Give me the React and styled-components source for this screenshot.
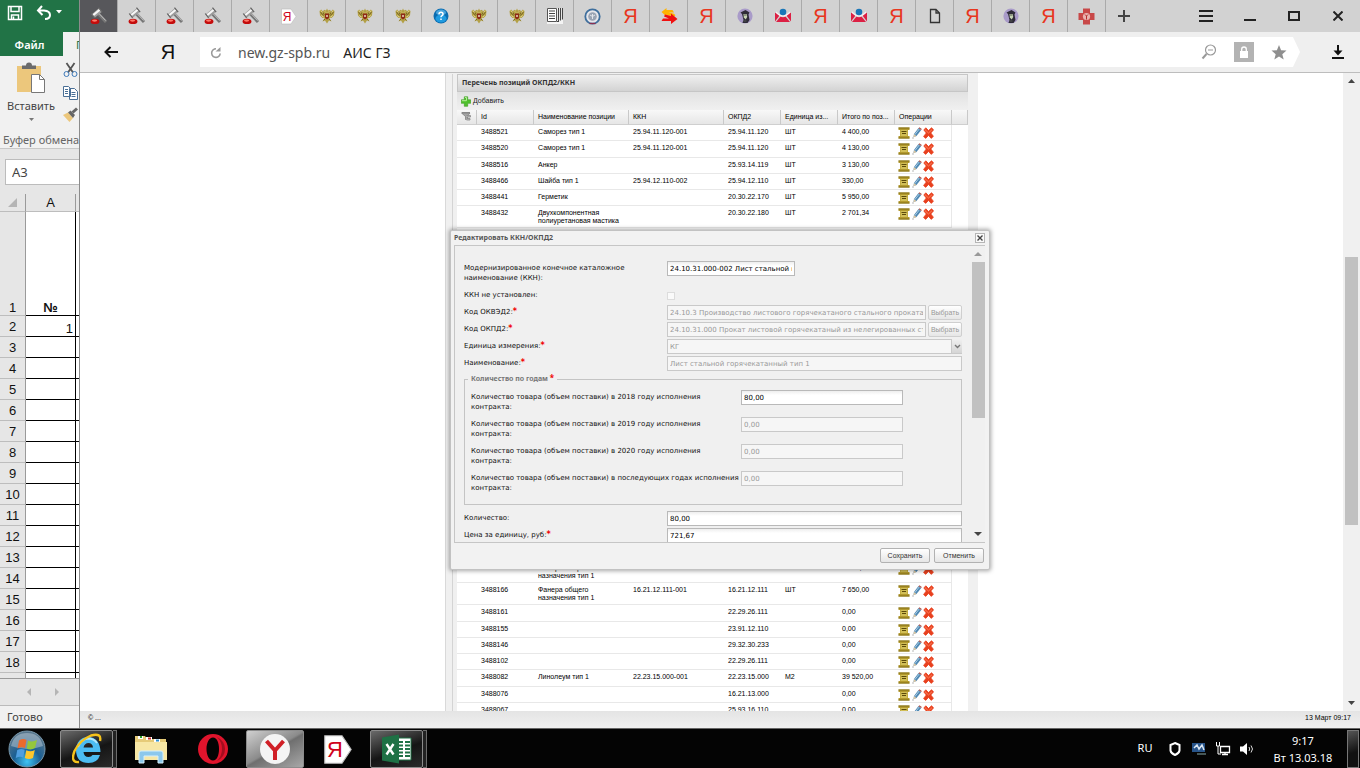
import React from "react";
import styled, { createGlobalStyle, css } from "styled-components";

const GlobalStyle = createGlobalStyle`
  * { box-sizing: border-box; }
  html, body { margin: 0; padding: 0; }
  body { font-family: "Noto Sans", sans-serif; overflow: hidden; }
  button, input, select { font-family: inherit; margin: 0; }
`;

const tiny = css`
  font-family: "Liberation Sans", sans-serif;
  font-size: 7px;
  line-height: 8px;
`;

const small = css`
  font-family: "DejaVu Sans", sans-serif;
  font-size: 7px;
  line-height: 10px;
`;

const bare = css`
  border: 0;
  padding: 0;
  background: none;
  display: flex;
  align-items: center;
  justify-content: center;
  color: inherit;
`;

const Screen = styled.div`
  display: flex;
  flex-direction: column;
  height: 100vh;
  overflow: hidden;
`;

const Desktop = styled.div`
  display: flex;
  flex: 1;
  min-height: 0;
`;

/* ---------- spreadsheet window ---------- */

const Sheet = styled.section`
  display: flex;
  flex-direction: column;
  flex: 0 0 80px;
  min-width: 0;
  overflow: hidden;
  background: #e6e6e6;
  color: #444;
  border-right: 1px solid #8c8c8c;
`;

const QuickBar = styled.div`
  display: flex;
  gap: 12px;
  flex: 0 0 32px;
  padding: 3px 0 10px 7px;
  background: #217346;
`;

const PlainButton = styled.button`
  ${bare}
`;

const RibbonTabs = styled.div`
  display: flex;
  flex: 0 0 24px;
  background: #f1f1f1;
`;

const RibbonTab = styled.button`
  ${bare}
  flex: 0 0 ${(p) => (p.$file ? "63px" : "40px")};
  padding-left: ${(p) => (p.$file ? "0" : "13px")};
  justify-content: ${(p) => (p.$file ? "center" : "flex-start")};
  padding-right: ${(p) => (p.$file ? "4px" : "0")};
  font-size: 11px;
  font-weight: ${(p) => (p.$file ? "600" : "400")};
  color: ${(p) => (p.$file ? "#fff" : "#217346")};
  background: ${(p) => (p.$file ? "#217346" : "#f1f1f1")};
`;

const Ribbon = styled.div`
  display: flex;
  flex-direction: column;
  flex: 0 0 93px;
  background: #f1f1f1;
  border-bottom: 1px solid #c8c8c8;
`;

const RibbonTools = styled.div`
  display: flex;
  flex: 1;
  padding-top: 6px;
`;

const PasteButton = styled.button`
  ${bare}
  flex: 0 0 62px;
  flex-direction: column;
  justify-content: flex-start;
  font-size: 11px;
  line-height: 16px;
  gap: 4px;
`;

const ToolStack = styled.div`
  display: flex;
  flex-direction: column;
  gap: 7px;
`;

const RibbonLabel = styled.div`
  font-size: 11px;
  line-height: 16px;
  padding-left: 3px;
  white-space: nowrap;
  color: #666;
`;

const NameBoxRow = styled.div`
  display: flex;
  flex: 0 0 45px;
  padding: 10px 0 9px 5px;
`;

const NameBox = styled.input`
  width: 90px;
  flex: none;
  border: 1px solid #bcbcbc;
  background: #fff;
  padding: 0 6px;
  font-size: 13px;
  color: #444;
`;

const GridArea = styled.div`
  flex: 1;
  min-height: 0;
  overflow: hidden;
`;

const CellTable = styled.table`
  table-layout: fixed;
  width: 140px;
  border-collapse: separate;
  border-spacing: 0;
  font: 13px "Liberation Sans", sans-serif;
  color: #111;
`;

const RowHead = styled.th`
  height: ${(p) => (p.$h ? p.$h : 21)}px;
  padding: 0;
  font-weight: 400;
  text-align: center;
  vertical-align: ${(p) => (p.$h > 30 ? "bottom" : "middle")};
  background: #e6e6e6;
  border-right: 1px solid #9a9a9a;
  border-bottom: 1px solid #bdbdbd;
`;

const SheetCell = styled.td`
  padding: 0 2px;
  background: #fff;
  text-align: ${(p) => (p.$center ? "center" : "right")};
  vertical-align: bottom;
  font-weight: ${(p) => (p.$center ? "700" : "400")};
  border-right: 1px solid #000;
  border-bottom: 1px solid #000;
`;

const SheetNav = styled.div`
  display: flex;
  align-items: center;
  gap: 24px;
  flex: 0 0 28px;
  padding-left: 27px;
  border-top: 1px solid #999;
  border-bottom: 1px solid #bbb;
`;

const SheetStatus = styled.div`
  flex: 0 0 22px;
  padding-left: 7px;
  font-size: 11px;
  line-height: 22px;
  background: #f1f1f1;
`;

/* ---------- browser window ---------- */

const Browser = styled.section`
  display: flex;
  flex-direction: column;
  flex: 1;
  min-width: 0;
  background: #fff;
`;

const TabStrip = styled.div`
  display: flex;
  flex: 0 0 32px;
  background: #d2d2d2;
`;

const Tab = styled.button`
  ${bare}
  flex: 0 1 38px;
  border-right: 1px solid #aaa;
  background: ${(p) => (p.$active ? "#57575b" : "#d2d2d2")};
`;

const NewTab = styled.button`
  ${bare}
  flex: 0 0 36px;
`;

const WindowButtons = styled.div`
  display: flex;
  margin-left: auto;
`;

const WindowButton = styled.button`
  ${bare}
  width: 44px;
`;

const Letter = styled.span`
  font: 20px/20px "Liberation Sans", sans-serif;
  color: ${(p) => p.$color || "#e8361e"};
`;

const Toolbar = styled.div`
  display: flex;
  align-items: center;
  flex: 0 0 41px;
  background: #efefef;
  border-bottom: 1px solid #bdbdbd;
`;

const ToolbarButton = styled.button`
  ${bare}
  width: ${(p) => p.$w}px;
  height: 32px;
`;

const AddressBar = styled.div`
  display: flex;
  align-items: center;
  flex: 1;
  height: 30px;
  margin-left: 6px;
  background: #fff;
  clip-path: polygon(0 0, calc(100% - 7px) 0, 100% 50%, calc(100% - 7px) 100%, 0 100%);
  font-size: 14px;
  color: #222;
`;

const Host = styled.span`
  color: #555;
  padding: 0 13px 0 6px;
`;

const AddressIcons = styled.div`
  display: flex;
  align-items: center;
  gap: 17px;
  margin-left: auto;
  padding-right: 13px;
`;

const LockBox = styled.button`
  ${bare}
  width: 20px;
  height: 20px;
  background: #b3b3b3;
`;

const Viewport = styled.div`
  display: flex;
  flex: 1;
  min-height: 0;
`;

const Page = styled.main`
  flex: 1;
  min-width: 0;
  overflow: hidden;
`;

const ScrollTrack = styled.div`
  display: flex;
  flex-direction: column;
  align-items: center;
  flex: 0 0 17px;
  padding: 6px 0;
  background: #f0f0f0;
`;

const ScrollThumb = styled.div`
  width: 13px;
  height: 268px;
  margin-top: 174px;
  margin-bottom: auto;
  background: #c1c1c1;
`;

const PageStatus = styled.footer`
  ${tiny}
  display: flex;
  justify-content: space-between;
  flex: 0 0 17px;
  padding: 3px 9px 0 8px;
  color: #000;
  background: linear-gradient(#e4e4e4, #f0f0f0);
`;

/* ---------- register grid ---------- */

const Column = styled.div`
  position: relative;
  width: 533px;
  height: 100%;
  margin: 0 auto;
  padding: 1px 10px 0 6px;
  background: #f0f0f0;
  border-left: 1px solid #d9d9d9;
`;

const Panel = styled.section`
  height: 100%;
  padding-left: 4px;
  overflow: hidden;
  border-left: 1px solid #d4d4d4;
  ${tiny}
`;

const PanelTitle = styled.h2`
  margin: 0;
  height: 18px;
  padding-left: 4px;
  font: bold 7px/16px "Noto Sans", sans-serif;
  color: #333;
  background: linear-gradient(#f0f0f0, #d3d3d3);
  border: 1px solid #c6c6c6;
`;

const PanelTools = styled.div`
  display: flex;
  height: 18px;
  padding-left: 4px;
  background: linear-gradient(#e2e2e2, #f0f0f0);
`;

const AddButton = styled.button`
  ${bare}
  ${tiny}
  gap: 2px;
  color: #222;
`;

const Register = styled.table`
  table-layout: fixed;
  width: 100%;
  border-collapse: separate;
  border-spacing: 0;
  background: #fff;
  color: #000;
`;

const HeadCell = styled.th`
  height: 15px;
  padding: 0 0 0 4px;
  font-weight: 400;
  text-align: left;
  white-space: nowrap;
  background: linear-gradient(#f8f8f8, #e6e6e6);
  border-right: 1px solid #c9c9c9;
  border-bottom: 1px solid #cfcfcf;
`;

const Row = styled.tr`
  height: ${(p) => p.$h || 16}px;
  &:nth-child(4n + 2) { height: ${(p) => p.$h || 17}px; }
`;

const Cell = styled.td`
  padding: ${(p) => (p.$icons ? "2px 0 0 3px" : "3px 0 0 4px")};
  ${(p) => p.$wrap && "padding-right: 8px;"}
  vertical-align: top;
  white-space: ${(p) => (p.$wrap ? "normal" : "nowrap")};
  border-bottom: ${(p) => (p.$blank ? "0" : "1px solid #e8e8e8")};
  border-right: ${(p) => (p.$icons ? "1px solid #e8e8e8" : "0")};
`;

const RowTools = styled.div`
  display: flex;
  gap: 1px;
`;

/* ---------- dialog ---------- */

const Dialog = styled.section`
  position: absolute;
  left: 4px;
  top: 157px;
  display: flex;
  flex-direction: column;
  width: 540px;
  height: 340px;
  padding: 0 4px 0 3px;
  background: #f2f2f2;
  border: 1px solid #c2c2c2;
  border-radius: 2px;
  box-shadow: 0 0 4px 1px rgba(0, 0, 0, 0.35);
  ${small}
`;

const DialogTitle = styled.header`
  display: flex;
  align-items: center;
  justify-content: space-between;
  flex: 0 0 14px;
  font: bold 7px/12px "Noto Sans", sans-serif;
  color: #555;
`;

const CloseButton = styled.button`
  ${bare}
  width: 10px;
  height: 10px;
  background: #fafafa;
  border: 1px solid #b5b5b5;
`;

const DialogBody = styled.div`
  display: flex;
  flex: 1;
  min-height: 0;
  overflow: hidden;
  background: #f0f0f0;
  border: 1px solid #c6c6c6;
  border-right: 0;
`;

const Form = styled.form`
  flex: 1;
  display: flex;
  flex-direction: column;
  gap: 2px;
  padding: 15px 9px 0;
`;

const Field = styled.div`
  display: flex;
  gap: 2px;
  flex: none;
  min-height: ${(p) => p.$h || 15}px;
`;

const Label = styled.label`
  flex: 0 0 ${(p) => p.$w || 201}px;
  padding: 2px 22px 0 0;
  color: #111;
  ${(p) => p.$w && "padding-right: 0; white-space: nowrap;"}
`;

const Star = styled.span`
  color: #f00000;
  font-weight: 700;
  font-size: 8px;
  line-height: 8px;
`;

const TextInput = styled.input`
  ${small}
  flex: ${(p) => (p.$w ? `0 0 ${p.$w}px` : "1")};
  min-width: 0;
  height: 15px;
  padding: 0 2px;
  color: #000;
  background: linear-gradient(#eee, #fff 4px);
  border: 1px solid #b9b9b9;
  border-radius: 0;
  &:disabled { color: #999; background: #f6f6f6; border-color: #c9c9c9; }
`;

const Tick = styled.input`
  appearance: none;
  width: 8px;
  height: 8px;
  margin-top: 4px;
  background: #fafafa;
  border: 1px solid #dcdcdc;
`;

const SelectWrap = styled.div`
  display: flex;
  position: relative;
  flex: 1;
`;

const Select = styled.select`
  ${small}
  appearance: none;
  flex: 1;
  height: 15px;
  padding: 0 2px;
  color: #999;
  opacity: 1;
  background: #f6f6f6;
  border: 1px solid #c9c9c9;
  border-radius: 0;
`;

const Trigger = styled.span`
  position: absolute;
  right: 0;
  top: 0;
  display: flex;
  align-items: center;
  justify-content: center;
  width: 11px;
  height: 14px;
  background: linear-gradient(#f0f0f0, #d5d5d5);
  border-left: 1px solid #c9c9c9;
  pointer-events: none;
`;

const PushButton = styled.button`
  ${tiny}
  width: ${(p) => p.$w}px;
  height: 15px;
  padding: 0;
  white-space: nowrap;
  color: #333;
  background: linear-gradient(#fff, #e6e6e6);
  border: 1px solid #b2b2b2;
  border-radius: 2px;
  &:disabled { color: #999; border-color: #cfcfcf; }
`;

const Years = styled.fieldset`
  display: flex;
  flex-direction: column;
  gap: 5px;
  flex: none;
  height: 131px;
  margin: 1px 0 4px;
  padding: 6px 6px 0;
  border: 1px solid #c4c4c4;
`;

const Legend = styled.legend`
  padding: 0 3px;
  margin-left: -3px;
  font: bold 7px/10px "Noto Sans", sans-serif;
  color: #777;
`;

const DialogScroll = styled.div`
  display: flex;
  flex-direction: column;
  align-items: center;
  flex: 0 0 14px;
  padding: 6px 0;
  background: #f0f0f0;
`;

const DialogThumb = styled.div`
  width: 13px;
  height: 156px;
  margin: 6px 0 auto;
  background: #c1c1c1;
`;

const DialogFooter = styled.footer`
  display: flex;
  justify-content: flex-end;
  gap: 4px;
  flex: 0 0 26px;
  padding: 5px 1px 0 0;
`;

/* ---------- taskbar ---------- */

const Taskbar = styled.nav`
  display: flex;
  align-items: center;
  flex: 0 0 40px;
  padding: 1px 1px 0 8px;
  color: #fff;
  background: #040404;
  border-top: 1px solid #666;
`;

const TaskButton = styled.button`
  ${bare}
  width: ${(p) => p.$w}px;
  height: 38px;
  border: ${(p) => (p.$kind ? "1px solid #8c8c8c" : "0")};
  border-radius: 2px;
  ${(p) => p.$kind === "open" && "background: linear-gradient(160deg, #6a6a6a, #151515 55%, #2a2a2a);"}
  ${(p) => p.$kind === "active" && "background: linear-gradient(150deg, #d0d0d0, #8b8b8b 48%, #6f6f6f 52%, #a8a8a8);"}
`;

const StackEdge = styled.span`
  width: 4px;
  height: 38px;
  border: 1px solid #6c6c6c;
  border-left: 0;
  background: #222;
`;

const Spacer = styled.span`
  flex: 0 0 ${(p) => p.$w}px;
`;

const Tray = styled.div`
  display: flex;
  align-items: center;
  gap: 8px;
  margin-left: auto;
`;

const Lang = styled.button`
  ${bare}
  font-size: 11px;
  width: 16px;
  margin-right: 6px;
  padding-bottom: 4px;
`;

const Clock = styled.time`
  width: 72px;
  margin-left: 4px;
  text-align: center;
  font-size: 11px;
  line-height: 17px;
  white-space: nowrap;
`;

const ShowDesktop = styled.button`
  width: 12px;
  height: 38px;
  padding: 0;
  background: linear-gradient(160deg, #555, #111 60%);
  border: 1px solid #777;
`;

/* ---------- drawings ---------- */

const Gavel = () => (
  <svg width="18" height="18" viewBox="0 0 18 18">
    <path d="M8 6.500 16 15" stroke="#777" strokeWidth="3" />
    <path d="M8.500 6 15.800 13.600" stroke="#c9c9c9" strokeWidth="1" />
    <path d="M1.500 7.500 9 1 12 4.800 4.500 11Z" fill="#9b9b9b" />
    <path d="M2.600 7.300 9 2 10.400 3.600 3.900 9Z" fill="#f6f6f6" />
    <path d="M1.200 6.500 4.600 10.800M8.500 .700 12.200 5.200" stroke="#666" strokeWidth="1.200" />
    <ellipse cx="5" cy="14.400" rx="4.400" ry="2.700" fill="#c40c0c" />
    <ellipse cx="4.600" cy="13.600" rx="2.600" ry="1.100" fill="#ff7a6a" />
  </svg>
);

const Eagle = () => (
  <svg width="18" height="18" viewBox="0 0 18 18">
    <path d="M1.500 4 3.200 2.400 5 4.500 6 2.800 8 3.500 9 1.500l1 2L12 2.800 13 4.500 14.800 2.400 16.500 4 16 8.500 13.500 11 11.500 11 13.500 14.500 11 13.500 9 16.500 7 13.500 4.500 14.500 6.500 11 4.500 11 2 8.500Z" fill="#b3a045" />
    <path d="M2.500 5 5.500 9M4.200 4.500 6.400 8M15.500 5 12.500 9M13.800 4.500 11.600 8M5.500 13.500 7 12M12.500 13.500 11 12" stroke="#6e5c1e" strokeWidth=".800" />
    <path d="M3 3.600 4.500 5.500M15 3.600 13.500 5.500M7 4.500l1 1M11 4.500l-1 1M3.500 8.500l2 1.500M14.500 8.500l-2 1.500" stroke="#f0e49a" strokeWidth=".900" />
    <path d="M7 6.500h4V11L9 12.500 7 11Z" fill="#8f2a18" />
    <circle cx="9" cy="9" r="1" fill="#e8d8c0" />
  </svg>
);

const Help = () => (
  <svg width="16" height="16" viewBox="0 0 16 16">
    <circle cx="8" cy="8" r="7.500" fill="#0b6cb0" />
    <ellipse cx="8" cy="10.500" rx="5.500" ry="4" fill="#1f9be0" />
    <ellipse cx="8" cy="4.500" rx="5" ry="3" fill="#4aa5dc" />
    <path d="M6 6.200Q6 4.200 8 4.200T10 6.200Q10 7.200 8.700 7.900 8 8.300 8 9.300M8 10.600v1.500" fill="none" stroke="#fff" strokeWidth="1.500" />
  </svg>
);

const YaBadge = ({ size = 17 }) => (
  <svg width={size} height={size} viewBox="0 0 17 17">
    <path d="M1.500 1h9.500L16 8.500 11 16H1.500Z" fill="#fff" stroke="#bbb" strokeWidth=".6" />
    <text x="2.800" y="12.800" fontSize="12" fontFamily="Liberation Sans, sans-serif" fill="#d0021b">Я</text>
  </svg>
);

const News = () => (
  <svg width="16" height="16" viewBox="0 0 16 16">
    <path d="M0 0h16v16H0Z" fill="#f4f4f4" />
    <path d="M.500 .500h9v13h-9Z" fill="#fff" stroke="#555" />
    <path d="M2 3h6M2 5.500h6M2 8h6M2 10.500h6" stroke="#444" />
    <path d="M11.500 0v13.500H10M13.500 0v12.500M15.500 0v11.500" fill="none" stroke="#444" strokeWidth="1.100" />
  </svg>
);

const Seal = () => (
  <svg width="17" height="17" viewBox="0 0 17 17">
    <circle cx="8.500" cy="8.500" r="7.200" fill="#e6e6ea" stroke="#3f6f9d" strokeWidth="1.800" />
    <circle cx="8.500" cy="8.500" r="4.300" fill="#9aa4b3" />
    <path d="M6 7 8.500 8.500 11 7M8.500 6v5" stroke="#e4e6ea" fill="none" />
    <path d="M5.500 15.500h6" stroke="#8b3050" strokeWidth="1.300" />
  </svg>
);

const Swap = () => (
  <svg width="18" height="16" viewBox="0 0 18 16">
    <path d="M6.500 0 1.500 4 5 7.200 15 8.200Q16 7 14 5.800L8.500 4.500H14L12.500 2H6.500Z" fill="#ffb400" />
    <path d="M5 6.500 11 8V5.500L17.500 11 11 16V13H1.500L3 10.500H9L4 8.500Z" fill="#f01010" />
  </svg>
);

const Avatar = () => (
  <svg width="16" height="16" viewBox="0 0 16 16">
    <circle cx="8" cy="8" r="7.600" fill="#a99bc9" />
    <path d="M3.500 4.500 8.500 2 12.500 4.500 11.500 6.500 12.500 12 10.500 15 5.500 15 6.500 12 5 6Z" fill="#2e2b38" />
    <path d="M6.500 6h3.200l.500 3-1.500 2.500L6.800 9.500Z" fill="#c6d3b4" />
    <path d="M7 7h2.500M6.500 13h3" stroke="#555b50" />
  </svg>
);

const Mail = () => (
  <svg width="18" height="16" viewBox="0 0 18 16">
    <path d="M1 4.500 5.500 7.500 1 13.500ZM17 4.500 12.500 7.500 17 13.500Z" fill="#dc2044" />
    <path d="M2 14 6.500 8.500Q9 10 11.500 8.500L16 14Z" fill="#dc2044" />
    <path d="M2 4Q9 12 16 4" fill="none" stroke="#f6f0f2" strokeWidth="1.200" />
    <circle cx="9" cy="4" r="3.300" fill="#1976b8" />
  </svg>
);

const Blank = () => (
  <svg width="12" height="16" viewBox="0 0 12 16">
    <path d="M1.500 1.500H7L10.500 5V14.500h-9ZM7 1.500V5h3.500" fill="none" stroke="#333" strokeWidth="1.300" />
  </svg>
);

const Cross = () => (
  <svg width="17" height="17" viewBox="0 0 17 17">
    <path d="M5 .500h7V5h4.500v7H12v4.500H5V12H.500V5H5Z" fill="#c84848" />
    <circle cx="8.500" cy="8.500" r="3.600" fill="#e9b3b0" />
    <path d="M7 6.500 8.500 8 10 6.500M8.500 8v3.500" stroke="#b52f2f" fill="none" />
  </svg>
);

const Ya = () => <Letter>Я</Letter>;

const ScrollIcon = () => (
  <svg width="12" height="12" viewBox="0 0 12 12">
    <path d="M.500 .500h11v2.500H10v6h1.500v2.500H.500V9H2V3H.500Z" fill="#b39a2e" />
    <path d="M.500 1h11M.500 11h11" stroke="#7c6710" strokeWidth=".900" />
    <path d="M2.500 3h7v6h-7Z" fill="#d2bf57" />
    <path d="M3.500 4.500h5M4 6.500h4" stroke="#5c4a0a" />
  </svg>
);

const Pencil = () => (
  <svg width="11" height="12" viewBox="0 0 11 12">
    <path d="M2.500 10 3 7 7.500 1 10.200 3 5.500 9Z" fill="#4f88b3" />
    <path d="M3.700 7.800 8.300 1.900" stroke="#a8cbe2" />
    <path d="M7.500 1.200 8.400 .300 10.800 2 10.200 3Z" fill="#b0564e" />
    <path d="M2.500 10.300 3 7.300 5.500 9Z" fill="#e0c8a0" />
    <path d="M1 11h2" stroke="#999" strokeWidth=".700" />
  </svg>
);

const Remove = () => (
  <svg width="11" height="12" viewBox="0 0 11 12">
    <path d="M.800 3 2.800 .800 5.500 3.500 8.500 .800 10.600 2.800 7.800 6 10.400 9.200 8.300 11.400 5.500 8.500 2.600 11.400 .600 9.400 3.300 6Z" fill="#e8401e" stroke="#e8401e" strokeWidth=".800" strokeLinejoin="round" />
    <path d="M2 2.600 5.500 6 9 2.600" fill="none" stroke="#ff8560" />
  </svg>
);

const Plus = () => (
  <svg width="10" height="11" viewBox="0 0 10 11">
    <path d="M3.300 .800h3.400v3h3v3.500h-3v3H3.300v-3h-3V3.800h3Z" fill="#4fc02c" stroke="#3a9a20" strokeWidth=".600" />
    <path d="M4 1.500h1.500v3.200H1" stroke="#b4ee98" fill="none" />
  </svg>
);

const Funnel = () => (
  <svg width="11" height="10" viewBox="0 0 11 10">
    <path d="M.500 2h8.500L6.500 5v3.500h-2V5.500Z" fill="#a5a5a5" stroke="#777" strokeWidth=".700" />
    <path d="M5.500 4.500h4v1.500h-3.500v1.500h3V9h-3.500" fill="#bbb" stroke="#888" strokeWidth=".800" />
    <path d="M1 1.500h8" stroke="#888" />
  </svg>
);

const Arrow = ({ dir = "down", color = "#444", w = 8, h = 4 }) => {
  const pts = {
    down: `0,0 ${w},0 ${w / 2},${h}`,
    up: `0,${h} ${w},${h} ${w / 2},0`,
    left: `${w},0 ${w},${h} 0,${h / 2}`,
    right: `0,0 0,${h} ${w},${h / 2}`,
    corner: `${w},0 ${w},${h} 0,${h}`,
  };
  return (
    <svg width={w} height={h} viewBox={`0 0 ${w} ${h}`}>
      <polygon points={pts[dir]} fill={color} />
    </svg>
  );
};

const StartOrb = () => (
  <svg width="38" height="38" viewBox="0 0 38 38">
    <defs>
      <radialGradient id="orb" cx="50%" cy="85%" r="75%">
        <stop offset="0" stopColor="#3fc4f4" />
        <stop offset=".5" stopColor="#1b5f93" />
        <stop offset="1" stopColor="#56758c" />
      </radialGradient>
    </defs>
    <circle cx="19" cy="19" r="18" fill="url(#orb)" stroke="#7897aa" />
    <path d="M3 16Q6 3 19 3t16 13Q19 22 3 16Z" fill="#b9cad6" opacity=".5" />
    <path d="M11 10.500Q15 8 18.500 10L17 18Q13.500 16.500 9.500 18.500Z" fill="#ec6a2c" />
    <path d="M20 10.500Q24 12.500 29 10L27 18Q23 20.500 18.700 18.500Z" fill="#94c63c" />
    <path d="M9.200 20Q13 18 16.700 19.700L15.200 27.500Q12 26 7.800 28Z" fill="#4f9ee0" />
    <path d="M18.300 20.200Q22.500 22.500 26.800 20L25 28Q21 30 16.800 28Z" fill="#fcc62c" />
  </svg>
);

const IeIcon = () => (
  <svg width="30" height="32" viewBox="0 0 30 32">
    <path fillRule="evenodd" d="M16 4C23.500 4 28.500 9.500 28.500 19H11.500Q12 24 16.500 24 19.500 24 20.500 22H28Q25.500 30 16.500 30 4.500 30 4 17.500 4.500 4.500 16 4ZM11.500 14.500H21Q20.500 10 16.500 10 12.500 10 11.500 14.500Z" fill="#4cbcf2" />
    <path d="M6 14Q8.500 6.500 16 5.500 22 5.500 25 10" fill="none" stroke="#b4e8fc" strokeWidth="1.800" />
    <path d="M7 29Q-2 30 2.500 18 8 7 19 2.500 30 -.500 28 8" fill="none" stroke="#f5c21a" strokeWidth="2.400" />
  </svg>
);

const FolderIcon = () => (
  <svg width="34" height="30" viewBox="0 0 34 30">
    <path d="M1 2h10l2 3h19v21H1Z" fill="#e6cb78" />
    <path d="M4 2h5v3H4ZM12 3h6v3h-6ZM20 5h6v3h-6Z" fill="#fff" />
    <path d="M6 2h2v2H6Z" fill="#2ca02c" />
    <path d="M14 3.500h3v2h-3Z" fill="#c9302c" />
    <path d="M22 5.500h3v2h-3Z" fill="#2f8fd0" />
    <path d="M1 8h32v18H1Z" fill="#f7e7a5" />
    <path d="M5 29V19q0-2 2-2h20q2 0 2 2V29H24V22H10V29Z" fill="#8cc8ec" stroke="#d6f0fc" />
  </svg>
);

const OperaIcon = () => (
  <svg width="32" height="32" viewBox="0 0 32 32">
    <path fillRule="evenodd" d="M16 1A15 15 0 1 0 16 31 15 15 0 1 0 16 1ZM16 4.500C20 4.500 22 10 22 16S20 27.500 16 27.500 9.500 22 9.500 16 12 4.500 16 4.500Z" fill="#e0142c" />
    <path d="M20 4Q28 8 28 16T20 28Q25 23 25 16T20 4Z" fill="#a30d1e" />
  </svg>
);

const YBrowserIcon = () => (
  <svg width="32" height="32" viewBox="0 0 32 32">
    <circle cx="16" cy="16" r="15" fill="#f4f4f4" />
    <path d="M7.500 8 16 17.500 24.500 8M16 17V27" fill="none" stroke="#d01f26" strokeWidth="4" />
  </svg>
);

const ExcelIcon = () => (
  <svg width="32" height="30" viewBox="0 0 32 30">
    <path d="M16 4h14v22H16Z" fill="#fff" stroke="#1e7145" />
    <path d="M18 8h4M24 8h5M18 11.500h4M24 11.500h5M18 15h4M24 15h5M18 18.500h4M24 18.500h5M18 22h4M24 22h5" stroke="#1e7145" strokeWidth="2" />
    <path d="M1 3.500 18 .500v29L1 26.500Z" fill="#1e7145" />
    <path d="M5.500 10 12.500 20.500M12.500 10 5.500 20.500" stroke="#fff" strokeWidth="2.400" />
  </svg>
);

/* ---------- data ---------- */

const tabs = [
  Gavel, Gavel, Gavel, Gavel, Gavel, YaBadge, Eagle, Eagle, Eagle, Help, Eagle, Eagle, News, Seal,
  Ya, Swap, Ya, Avatar, Mail, Ya, Mail, Ya, Blank, Ya, Avatar, Ya, Cross,
];

const topRows = [
  ["3488521", "Саморез тип 1", "25.94.11.120-001", "25.94.11.120", "ШТ", "4 400,00"],
  ["3488520", "Саморез тип 1", "25.94.11.120-001", "25.94.11.120", "ШТ", "4 130,00"],
  ["3488516", "Анкер", "", "25.93.14.119", "ШТ", "3 130,00"],
  ["3488466", "Шайба тип 1", "25.94.12.110-002", "25.94.12.110", "ШТ", "330,00"],
  ["3488441", "Герметик", "", "20.30.22.170", "ШТ", "5 950,00"],
  ["3488432", "Двухкомпонентная полиуретановая мастика", "", "20.30.22.180", "ШТ", "2 701,34"],
];

const bottomRows = [
  ["3488167", "Фанера общего назначения тип 1", "16.21.12.111-001", "16.21.12.111", "ШТ", "5 300,00"],
  ["3488166", "Фанера общего назначения тип 1", "16.21.12.111-001", "16.21.12.111", "ШТ", "7 650,00"],
  ["3488161", "", "", "22.29.26.111", "", "0,00"],
  ["3488155", "", "", "23.91.12.110", "", "0,00"],
  ["3488146", "", "", "29.32.30.233", "", "0,00"],
  ["3488102", "", "", "22.29.26.111", "", "0,00"],
  ["3488082", "Линолеум тип 1", "22.23.15.000-001", "22.23.15.000", "М2", "39 520,00"],
  ["3488076", "", "", "16.21.13.000", "", "0,00"],
  ["3488067", "", "", "25.93.16.110", "", "0,00"],
];

const heads = ["Id", "Наименование позиции", "ККН", "ОКПД2", "Единица из...", "Итого по поз...", "Операции", ""];
const widths = [20, 57, 95, 95, 57, 57, 57, 57];

const years = [
  ["в 2018 году исполнения", "80,00"],
  ["в 2019 году исполнения", "0,00"],
  ["в 2020 году исполнения", "0,00"],
  ["в последующих годах исполнения", "0,00"],
];

const RegisterRow = ({ row }) => (
  <Row $h={row[1].length > 22 ? 22 : undefined}>
    <Cell />
    {row.map((text, i) => (
      <Cell key={i} $wrap={i === 1}>{text}</Cell>
    ))}
    <Cell $icons>
      <RowTools>
        <PlainButton aria-label="Документ"><ScrollIcon /></PlainButton>
        <PlainButton aria-label="Изменить"><Pencil /></PlainButton>
        <PlainButton aria-label="Удалить"><Remove /></PlainButton>
      </RowTools>
    </Cell>
    <Cell $blank />
  </Row>
);

const SheetWindow = () => (
  <Sheet>
    <QuickBar>
      <PlainButton aria-label="Сохранить книгу">
        <svg width="16" height="16" viewBox="0 0 16 16" fill="none" stroke="#fff" strokeWidth="1.5">
          <path d="M1.500 1.500h13v13h-13ZM4 2v4.500h8V2M4.500 14.500V10h7v4.500M6.500 11.500v3" />
        </svg>
      </PlainButton>
      <PlainButton aria-label="Отменить ввод">
        <svg width="28" height="16" viewBox="0 0 28 16" fill="none" stroke="#fff" strokeWidth="2">
          <path d="M7 1 3 5.500 7.500 10M3 5.500h6Q15 6 15 10T10 14" />
          <path d="M21 5h6L24 8.500Z" fill="#fff" stroke="none" />
        </svg>
      </PlainButton>
    </QuickBar>
    <RibbonTabs>
      <RibbonTab $file>Файл</RibbonTab>
      <RibbonTab>Г</RibbonTab>
    </RibbonTabs>
    <Ribbon>
      <RibbonTools>
        <PasteButton>
          <svg width="30" height="32" viewBox="0 0 30 32">
            <path d="M1 4h24v26H1Z" fill="#ecc77c" />
            <path d="M6 3.500h4Q10 .500 13 .500T16 3.500h4V7H6Z" fill="#6b6b6b" />
            <path d="M15.500 12.500h8l5 5v13h-13Z" fill="#fff" stroke="#777" />
            <path d="M23.500 12.500v5h5" fill="none" stroke="#777" />
          </svg>
          Вставить
          <Arrow color="#777" w={5} h={3} />
        </PasteButton>
        <ToolStack>
          <PlainButton aria-label="Вырезать">
            <svg width="15" height="16" viewBox="0 0 15 16" fill="none">
              <path d="M3.500 1 10 10.500M11.500 1 5 10.500" stroke="#555" strokeWidth="1.800" />
              <circle cx="3.500" cy="12" r="2.500" stroke="#3d78b8" />
              <circle cx="11.500" cy="12" r="2.500" stroke="#3d78b8" />
            </svg>
          </PlainButton>
          <PlainButton aria-label="Копировать">
            <svg width="15" height="15" viewBox="0 0 15 15" fill="#fff" stroke="#4a6f96">
              <path d="M.500 1.500h5l2 2v8h-7ZM6.500 3.500h5l3 3v8h-8Z" />
              <path d="M2 4.500h3M2 6.500h3M2 8.500h3M8.500 7.500h4M8.500 9.500h4M8.500 11.500h4" />
            </svg>
          </PlainButton>
          <PlainButton aria-label="Формат по образцу">
            <svg width="16" height="16" viewBox="0 0 16 16">
              <path d="M1 8 6 5.500 11 11 7.500 15Z" fill="#ecc77c" />
              <path d="M6 5.500 8.500 3.500 13 8 11 11Z" fill="#666" />
              <path d="M10.500 5.500 15 1.500" stroke="#666" strokeWidth="3" />
            </svg>
          </PlainButton>
        </ToolStack>
      </RibbonTools>
      <RibbonLabel>Буфер обмена</RibbonLabel>
    </Ribbon>
    <NameBoxRow>
      <NameBox aria-label="Имя ячейки" defaultValue="A3" />
    </NameBoxRow>
    <GridArea>
      <CellTable>
        <colgroup>
          <col style={{ width: 26 }} />
          <col style={{ width: 50 }} />
          <col />
        </colgroup>
        <tbody>
          <tr>
            <RowHead $h={18}><Arrow dir="corner" color="#b5b5b5" w={9} h={9} /></RowHead>
            <RowHead $h={18}>A</RowHead>
            <RowHead $h={18} />
          </tr>
          <tr>
            <RowHead $h={104}>1</RowHead>
            <SheetCell $center>№</SheetCell>
            <SheetCell />
          </tr>
          {Array.from({ length: 18 }, (_, i) => (
            <tr key={i}>
              <RowHead>{i < 17 ? i + 2 : ""}</RowHead>
              <SheetCell>{i === 0 ? "1" : ""}</SheetCell>
              <SheetCell />
            </tr>
          ))}
        </tbody>
      </CellTable>
    </GridArea>
    <SheetNav>
      <Arrow dir="left" color="#b5b5b5" w={4} h={8} />
      <Arrow dir="right" color="#b5b5b5" w={4} h={8} />
    </SheetNav>
    <SheetStatus>Готово</SheetStatus>
  </Sheet>
);

const EditDialog = () => (
  <Dialog role="dialog" aria-labelledby="dlg-title">
    <DialogTitle>
      <span id="dlg-title">Редактировать ККН/ОКПД2</span>
      <CloseButton aria-label="Закрыть">
        <svg width="6" height="6" viewBox="0 0 6 6"><path d="M.500 .500l5 5M5.500 .500l-5 5" stroke="#444" strokeWidth="1.400" /></svg>
      </CloseButton>
    </DialogTitle>
    <DialogBody>
      <Form>
        <Field $h={25}>
          <Label htmlFor="kkn">Модернизированное конечное каталожное наименование (ККН):</Label>
          <TextInput id="kkn" $w={128} defaultValue="24.10.31.000-002 Лист стальной горячекатанный" />
        </Field>
        <Field>
          <Label htmlFor="nokkn">ККН не установлен:</Label>
          <Tick id="nokkn" type="checkbox" disabled />
        </Field>
        <Field>
          <Label htmlFor="okved">Код ОКВЭД2:<Star>*</Star></Label>
          <TextInput id="okved" disabled defaultValue="24.10.3 Производство листового горячекатаного стального проката" />
          <PushButton type="button" $w={34} disabled>Выбрать</PushButton>
        </Field>
        <Field>
          <Label htmlFor="okpd">Код ОКПД2:<Star>*</Star></Label>
          <TextInput id="okpd" disabled defaultValue="24.10.31.000 Прокат листовой горячекатаный из нелегированных сталей" />
          <PushButton type="button" $w={34} disabled>Выбрать</PushButton>
        </Field>
        <Field>
          <Label htmlFor="unit">Единица измерения:<Star>*</Star></Label>
          <SelectWrap>
            <Select id="unit" disabled><option>КГ</option></Select>
            <Trigger>
              <svg width="7" height="5" viewBox="0 0 7 5"><path d="M1 1l2.500 2.500L6 1" fill="none" stroke="#777" strokeWidth="1.400" /></svg>
            </Trigger>
          </SelectWrap>
        </Field>
        <Field>
          <Label htmlFor="name">Наименование:<Star>*</Star></Label>
          <TextInput id="name" disabled defaultValue="Лист стальной горячекатанный тип 1" />
        </Field>
        <Years>
          <Legend>Количество по годам <Star>*</Star></Legend>
          {years.map(([text, value], i) => (
            <Field key={text}>
              <Label $w={268} htmlFor={`year${i}`}>
                Количество товара (объем поставки) {text}<br />контракта:
              </Label>
              <TextInput id={`year${i}`} $w={162} disabled={i > 0} defaultValue={value} />
            </Field>
          ))}
        </Years>
        <Field>
          <Label htmlFor="qty">Количество:</Label>
          <TextInput id="qty" defaultValue="80,00" />
        </Field>
        <Field>
          <Label htmlFor="price">Цена за единицу, руб:<Star>*</Star></Label>
          <TextInput id="price" defaultValue="721,67" />
        </Field>
      </Form>
      <DialogScroll>
        <Arrow dir="up" color="#999" />
        <DialogThumb />
        <Arrow />
      </DialogScroll>
    </DialogBody>
    <DialogFooter>
      <PushButton $w={50}>Сохранить</PushButton>
      <PushButton $w={50}>Отменить</PushButton>
    </DialogFooter>
  </Dialog>
);

const BrowserWindow = () => (
  <Browser>
    <TabStrip>
      {tabs.map((Icon, i) => (
        <Tab key={i} $active={i === 0} aria-label={`Вкладка ${i + 1}`}><Icon /></Tab>
      ))}
      <NewTab aria-label="Новая вкладка">
        <svg width="12" height="12" viewBox="0 0 12 12"><path d="M6 0v12M0 6h12" stroke="#444" strokeWidth="2" /></svg>
      </NewTab>
      <WindowButtons>
        <WindowButton aria-label="Меню">
          <svg width="14" height="12" viewBox="0 0 14 12"><path d="M0 1h14M0 6h14M0 11h14" stroke="#222" strokeWidth="2" /></svg>
        </WindowButton>
        <WindowButton aria-label="Свернуть">
          <svg width="12" height="10" viewBox="0 0 12 10"><path d="M0 9h12" stroke="#222" strokeWidth="2" /></svg>
        </WindowButton>
        <WindowButton aria-label="Развернуть">
          <svg width="12" height="10" viewBox="0 0 12 10"><path d="M1 1h10v8H1Z" fill="none" stroke="#222" strokeWidth="2" /></svg>
        </WindowButton>
        <WindowButton aria-label="Закрыть окно">
          <svg width="10" height="10" viewBox="0 0 10 10"><path d="M.500 .500l9 9M9.500 .500l-9 9" stroke="#222" strokeWidth="2" /></svg>
        </WindowButton>
      </WindowButtons>
    </TabStrip>
    <Toolbar>
      <ToolbarButton $w={62} aria-label="Назад">
        <svg width="14" height="12" viewBox="0 0 14 12"><path d="M14 6H2M6.500 1 1.500 6l5 5" fill="none" stroke="#111" strokeWidth="2" /></svg>
      </ToolbarButton>
      <ToolbarButton $w={52} aria-label="Яндекс"><Letter $color="#111">Я</Letter></ToolbarButton>
      <AddressBar>
        <ToolbarButton $w={32} aria-label="Обновить">
          <svg width="12" height="13" viewBox="0 0 12 13">
            <path d="M8 3.300A4.300 4.300 0 1 0 10.200 7.500" fill="none" stroke="#999" strokeWidth="1.600" />
            <path d="M6 0h4.800v5H6Z" fill="#fff" />
            <path d="M10.500 1v4.500H5.500Z" fill="#999" />
          </svg>
        </ToolbarButton>
        <Host>new.gz-spb.ru</Host>
        <span>АИС ГЗ</span>
        <AddressIcons>
          <PlainButton aria-label="Масштаб">
            <svg width="16" height="16" viewBox="0 0 16 16" fill="none" stroke="#999">
              <circle cx="9.500" cy="6" r="5" strokeWidth="1.200" />
              <path d="M7 6h5" />
              <path d="M5.500 10 1.500 14.500" strokeWidth="2" />
            </svg>
          </PlainButton>
          <LockBox aria-label="Защита">
            <svg width="8" height="12" viewBox="0 0 8 12">
              <path d="M0 5h8v7H0Z" fill="#fff" />
              <path d="M1.700 5.500V3.200Q1.700 1 4 1t2.300 2.200V5.500" fill="none" stroke="#fff" strokeWidth="1.300" />
            </svg>
          </LockBox>
          <PlainButton aria-label="Закладка">
            <svg width="16" height="15" viewBox="0 0 16 15"><path d="M8 0l2.100 5.200 5.400.400-4.200 3.600 1.400 5.300L8 11.600 3.300 14.500l1.400-5.300L.500 5.600l5.400-.400Z" fill="#8f8f8f" /></svg>
          </PlainButton>
        </AddressIcons>
      </AddressBar>
      <ToolbarButton $w={60} aria-label="Загрузки">
        <svg width="30" height="14" viewBox="0 0 30 14">
          <path d="M23 0v7" stroke="#111" strokeWidth="2" />
          <path d="M18.500 5.500h9L23 10.500Z" fill="#111" />
          <path d="M17 13h12" stroke="#111" strokeWidth="2" />
        </svg>
      </ToolbarButton>
    </Toolbar>
    <Viewport>
      <Page>
        <Column>
          <Panel>
            <PanelTitle>Перечень позиций ОКПД2/ККН</PanelTitle>
            <PanelTools>
              <AddButton><Plus />Добавить</AddButton>
            </PanelTools>
            <Register>
              <colgroup>
                {widths.map((w, i) => <col key={i} style={{ width: w }} />)}
                <col />
              </colgroup>
              <thead>
                <tr>
                  <HeadCell><Funnel /></HeadCell>
                  {heads.map((h, i) => <HeadCell key={i}>{h}</HeadCell>)}
                </tr>
              </thead>
              <tbody>
                {topRows.map((row) => <RegisterRow key={row[0]} row={row} />)}
                <Row $h={333}><Cell colSpan={9} /></Row>
                {bottomRows.map((row) => <RegisterRow key={row[0]} row={row} />)}
              </tbody>
            </Register>
          </Panel>
          <EditDialog />
        </Column>
      </Page>
      <ScrollTrack>
        <Arrow dir="up" w={7} />
        <ScrollThumb />
        <Arrow w={7} />
      </ScrollTrack>
    </Viewport>
    <PageStatus><span>© ...</span><span>13 Март 09:17</span></PageStatus>
  </Browser>
);

export default function App() {
  return (
    <Screen>
      <GlobalStyle />
      <Desktop>
        <SheetWindow />
        <BrowserWindow />
      </Desktop>
      <Taskbar>
        <TaskButton $w={38} aria-label="Пуск"><StartOrb /></TaskButton>
        <Spacer $w={14} />
        <TaskButton $w={53} $kind="open" aria-label="Internet Explorer"><IeIcon /></TaskButton>
        <StackEdge />
        <Spacer $w={5} />
        <TaskButton $w={58} aria-label="Проводник"><FolderIcon /></TaskButton>
        <Spacer $w={4} />
        <TaskButton $w={58} aria-label="Opera"><OperaIcon /></TaskButton>
        <Spacer $w={4} />
        <TaskButton $w={58} $kind="active" aria-label="Яндекс.Браузер"><YBrowserIcon /></TaskButton>
        <Spacer $w={4} />
        <TaskButton $w={58} aria-label="Поиск Яндекс"><YaBadge size={31} /></TaskButton>
        <Spacer $w={4} />
        <TaskButton $w={53} $kind="open" aria-label="Excel"><ExcelIcon /></TaskButton>
        <StackEdge />
        <Tray>
          <Lang>RU</Lang>
          <svg width="16" height="16" viewBox="0 0 16 16"><path d="M8 2 12.500 4v5.500Q12 12.500 8 14 4 12.500 3.500 9.500V4Z" fill="none" stroke="#fff" strokeWidth="2" /></svg>
          <svg width="16" height="16" viewBox="0 0 16 16">
            <path d="M1 2h13v9H1Z" fill="#27548a" />
            <path d="M3 7 6 4 8 8 11 4 13 9" stroke="#dce8f4" strokeWidth="1.500" fill="none" />
            <path d="M6 13h9" stroke="#8aa" />
          </svg>
          <svg width="16" height="16" viewBox="0 0 16 16" fill="none" stroke="#fff">
            <path d="M5.500 5.500h9v6h-9ZM7 13.500h6M10 11.500v2" strokeWidth="1.300" />
            <path d="M1.500 1v4h3V1M3 5v8h3" />
          </svg>
          <svg width="16" height="16" viewBox="0 0 16 16">
            <path d="M1 5.500h3L8 2v12L4 10.500H1Z" fill="#fff" />
            <path d="M10 6q1.500 2 0 4M12 4.500q3 3.500 0 7" fill="none" stroke="#ddd" />
          </svg>
          <Clock>9:17<br />Вт 13.03.18</Clock>
          <ShowDesktop aria-label="Показать рабочий стол" />
        </Tray>
      </Taskbar>
    </Screen>
  );
}
